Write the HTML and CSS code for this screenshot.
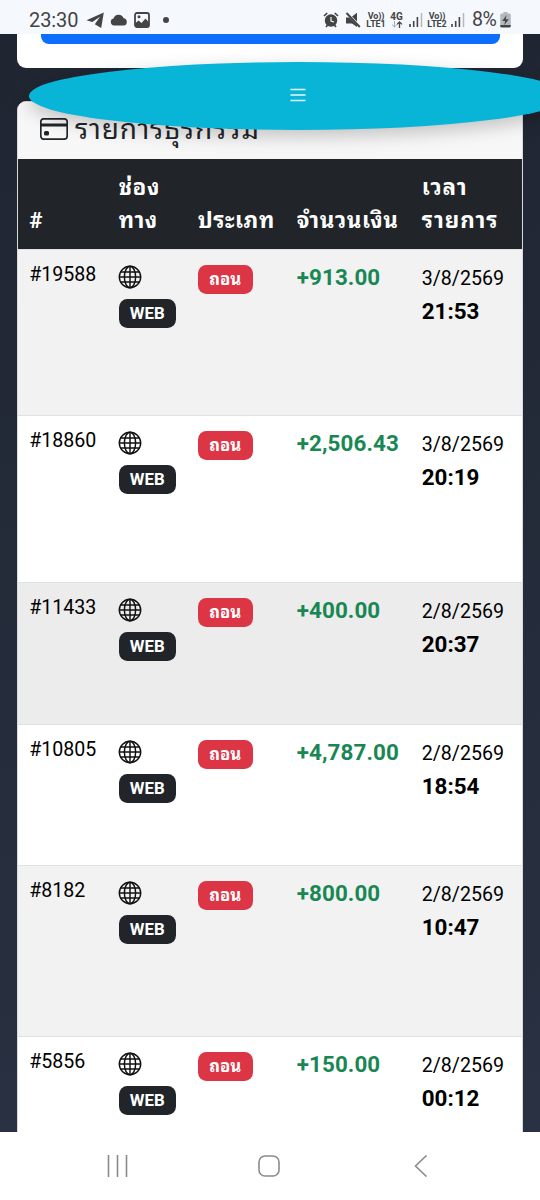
FILE: index.html
```html
<!DOCTYPE html>
<html lang="th">
<head>
<meta charset="utf-8">
<title>รายการธุรกรรม</title>
<link rel="stylesheet" href="styles.css">
</head>
<body>
<svg class="defs" width="0" height="0">
  <symbol id="globe" viewBox="0 0 24 24">
    <g fill="none" stroke="#111" stroke-width="1.45">
      <circle cx="12" cy="12" r="10.7"/>
      <ellipse cx="12" cy="12" rx="5.6" ry="10.7"/>
      <path d="M12 1v22M1 12h22M2.8 7h18.4M2.8 17h18.4"/>
    </g>
  </symbol>
  <symbol id="signal" viewBox="0 0 14 16">
    <path d="M1 12v3M4.7 9v6M8.4 5v10" stroke="#444" stroke-width="1.6"/>
    <path d="M12.5 1v14" stroke="#b5b9bd" stroke-width="1.5"/>
  </symbol>
</svg>
<div class="phone">
  <header class="status">
    <span class="clock">23:30</span>
    <svg class="telegram" width="19" height="17" viewBox="0 0 19 17"><path d="M.5 8.2 17.8.6 15.2 15.9 8.8 12.3 14 4.7 6.3 9.9Z" fill="#444"/></svg>
    <svg class="cloud" width="18" height="12" viewBox="0 0 18 12"><path d="M4 11.5a3.5 3.5 0 0 1-.5-6.9A5.3 5.3 0 0 1 13.6 4.3a3.7 3.7 0 0 1 .6 7.2Z" fill="#444"/></svg>
    <svg class="photo" width="16" height="16" viewBox="0 0 16 16"><rect x="1" y="1" width="14" height="14" rx="2" fill="none" stroke="#444" stroke-width="1.8"/><path d="M1 11.5 4.5 8.5l3 2.5 4-4.5L15 10.5V14H1Z" fill="#444"/><circle cx="5" cy="4.8" r="1.5" fill="#444"/></svg>
    <i class="dot"></i>
    <div class="status-right">
      <svg class="alarm" width="16" height="16" viewBox="0 0 16 16"><circle cx="8" cy="8.5" r="6.2" fill="#444"/><path d="M1 4 4.2 1M15 4l-3.2-3M3 15l2-2.5M13 15l-2-2.5" stroke="#444" stroke-width="1.7"/><path d="M8 5v4l3 1" fill="none" stroke="#f4f8fd" stroke-width="1.2"/></svg>
      <svg class="mute" width="16" height="16" viewBox="0 0 16 16"><path d="M1 5.5h3.5L12 13v2L7 11.5H1ZM7 4.5 12 .8V9.5Z" fill="#444"/><path d="m1.5 1 13.3 14" stroke="#444" stroke-width="1.9"/></svg>
      <span class="net lte1"><span>Vo))</span><span>LTE1</span></span>
      <span class="net fourg">4G<svg width="12" height="7" viewBox="0 0 12 7"><path d="M3.5 0v6M1 3.6 3.5 6 6 3.6" fill="none" stroke="#aaa"/><path d="M8.5 7V1M6 3.4 8.5 1 11 3.4" fill="none" stroke="#444" stroke-width="1.3"/></svg></span>
      <svg class="sig1" width="14" height="16"><use href="#signal"/></svg>
      <span class="net lte2"><span>Vo))</span><span>LTE2</span></span>
      <svg class="sig2" width="14" height="16"><use href="#signal"/></svg>
      <span class="percent">8%</span>
      <svg class="battery" width="11" height="16" viewBox="0 0 11 16"><path d="M3.5 0h4v1.5h2Q10.8 1.5 10.8 3v10H.2V3Q.2 1.5 1.5 1.5h2Z" fill="#b5b9bd"/><path d="M.2 13h10.6v1q0 1.6-1.6 1.6H1.8Q.2 15.6.2 14Z" fill="#444"/><path d="M6.6 3 2.2 9h2.9l-.8 4 4.5-5.7H5.7Z" fill="#444"/></svg>
    </div>
  </header>

  <main class="page">
    <section class="top-card"><div class="primary-button"></div></section>
    <div class="menu-pill">
      <svg width="16" height="14" viewBox="0 0 16 14"><path d="M.5 1.5h15M.5 7h15M.5 12.5h15" stroke="#e9fbff" stroke-width="1.5"/></svg>
    </div>
    <section class="card">
      <h2 class="card-title">
        <svg width="28" height="22" viewBox="0 0 28 22"><rect x=".8" y=".8" width="26.4" height="20.4" rx="3" fill="none" stroke="#212529" stroke-width="1.7"/><path d="M1 7h26" stroke="#212529" stroke-width="3"/><rect x="4" y="13" width="5" height="4.5" rx="1.5" fill="#212529"/></svg>
        <span>รายการธุรกรรม</span>
      </h2>
      <div class="row head">
        <div>#</div><div>ช่อง<br>ทาง</div><div>ประเภท</div><div>จำนวนเงิน</div><div class="when">เวลา<br>รายการ</div>
      </div>
      <div class="row h166 odd">
        <div class="id">#19588</div>
        <div class="channel"><svg><use href="#globe"/></svg><span class="badge dark">WEB</span></div>
        <div class="type"><span class="badge red">ถอน</span></div>
        <div class="amount">+913.00</div>
        <div class="time">3/8/2569<b>21:53</b></div>
      </div>
      <div class="row h167">
        <div class="id">#18860</div>
        <div class="channel"><svg><use href="#globe"/></svg><span class="badge dark">WEB</span></div>
        <div class="type"><span class="badge red">ถอน</span></div>
        <div class="amount">+2,506.43</div>
        <div class="time">3/8/2569<b>20:19</b></div>
      </div>
      <div class="row h142 pressed">
        <div class="id">#11433</div>
        <div class="channel"><svg><use href="#globe"/></svg><span class="badge dark">WEB</span></div>
        <div class="type"><span class="badge red">ถอน</span></div>
        <div class="amount">+400.00</div>
        <div class="time">2/8/2569<b>20:37</b></div>
      </div>
      <div class="row h141">
        <div class="id">#10805</div>
        <div class="channel"><svg><use href="#globe"/></svg><span class="badge dark">WEB</span></div>
        <div class="type"><span class="badge red">ถอน</span></div>
        <div class="amount">+4,787.00</div>
        <div class="time">2/8/2569<b>18:54</b></div>
      </div>
      <div class="row h171 odd">
        <div class="id">#8182</div>
        <div class="channel"><svg><use href="#globe"/></svg><span class="badge dark">WEB</span></div>
        <div class="type"><span class="badge red">ถอน</span></div>
        <div class="amount">+800.00</div>
        <div class="time">2/8/2569<b>10:47</b></div>
      </div>
      <div class="row h171">
        <div class="id">#5856</div>
        <div class="channel"><svg><use href="#globe"/></svg><span class="badge dark">WEB</span></div>
        <div class="type"><span class="badge red">ถอน</span></div>
        <div class="amount">+150.00</div>
        <div class="time">2/8/2569<b>00:12</b></div>
      </div>
    </section>
  </main>

  <nav class="navbar">
    <svg width="22" height="22" viewBox="0 0 22 22"><path d="M1.5 0v22M10.5 0v22M19.5 0v22" stroke="#8b8b8b" stroke-width="1.6"/></svg>
    <svg width="22" height="22" viewBox="0 0 22 22"><rect x="1" y="1" width="20" height="20" rx="6" fill="none" stroke="#8b8b8b" stroke-width="1.6"/></svg>
    <svg width="14" height="22" viewBox="0 0 14 22"><path d="M12.5.5 1.5 11l11 10.5" fill="none" stroke="#8b8b8b" stroke-width="1.6"/></svg>
  </nav>
</div>
</body>
</html>
```

FILE: styles.css
```css
* { box-sizing: border-box; }
body { margin: 0; font-family: Roboto, "Noto Sans Thai Looped", "Noto Looped Thai", Loma, Garuda, "Noto Sans Thai", sans-serif; }
svg { display: block; flex: none; }
.defs { position: absolute; }
.phone { width: 540px; height: 1200px; display: flex; flex-direction: column; overflow: hidden; }

.status { height: 34px; flex: none; display: flex; align-items: center; padding: 6px 29px 0 29px; background: #f5f9fe; color: #444; }
.clock { width: 50px; font-size: 20px; line-height: 24px; letter-spacing: -.1px; white-space: nowrap; }
.telegram { margin-left: 7px; }
.cloud { margin-left: 5px; }
.photo { margin-left: 6px; }
.dot { width: 6px; height: 6px; margin-left: 13px; border-radius: 50%; background: #444; }
.status-right { flex: 1; display: flex; align-items: center; justify-content: flex-end; }
.mute { margin-left: 6px; }
.net { display: flex; flex-direction: column; align-items: center; font-size: 9px; line-height: 8px; font-weight: 700; white-space: nowrap; letter-spacing: -.1px; }
.lte1 { width: 20px; margin-left: 5px; }
.fourg { width: 13px; margin-left: 4px; font-size: 10px; }
.sig1 { margin-left: 6px; }
.lte2 { width: 20px; margin-left: 4px; }
.sig2 { margin-left: 4px; }
.percent { width: 25px; margin-left: 7px; font-size: 19.5px; line-height: 24px; letter-spacing: -.5px; }
.battery { margin-left: 3px; }

.page { position: relative; height: 1098px; flex: none; padding: 0 17px; overflow: hidden; background: linear-gradient(175deg, #1f2531, #293142); }
.top-card { height: 33.5px; padding: 0 23.5px; background: #fff; border-radius: 0 0 9px 9px; }
.primary-button { height: 10px; background: #0d6efd; border-radius: 0 0 8px 8px; }
.menu-pill { position: absolute; left: 28.5px; top: 28px; width: 539px; height: 67.5px; display: flex; align-items: center; justify-content: center; padding-bottom: 2px; border-radius: 50%; background: #08b5d7; box-shadow: 0 6px 18px rgba(0,0,0,.22); }
.card { margin-top: 33.5px; border: 1px solid #d9dadb; border-radius: 9px 9px 0 0; background: #fff; overflow: hidden; }
.card-title { height: 57px; margin: 0; padding: 11px 0 0 22px; display: flex; align-items: flex-start; gap: 7px; background: #f7f7f7; color: #212529; font-size: 28px; font-weight: 400; line-height: 34px; letter-spacing: .85px; }
.card-title svg { margin-top: 5px; }

.row { display: grid; grid-template-columns: 89.5px 79px 99px 125px 1fr; border-bottom: 1px solid #dee2e6; color: #000; background: #fff; font-size: 22.4px; }
.row > div { padding-left: 11.2px; white-space: nowrap; }
.head { height: 91px; padding-bottom: 11px; align-items: end; background: #212529; color: #fff; font-weight: 700; line-height: 33.6px; letter-spacing: .6px; }
.head .when { letter-spacing: 1px; }
.odd { background: #f2f2f2; }
.pressed { background: #ececec; }
.h166 { height: 166.4px; }
.h167 { height: 166.8px; }
.h142 { height: 141.8px; }
.h141 { height: 141px; }
.h171 { height: 171px; }
.id { padding-top: 13px; font-size: 19.6px; line-height: 24px; }
.channel { padding-top: 15px; }
.channel svg { width: 24px; height: 24px; margin: 0 0 10px -.3px; }
.badge { display: flex; align-items: center; justify-content: center; height: 29px; border-radius: 8.4px; color: #fff; font-size: 16.8px; line-height: 17px; font-weight: 700; }
.dark { width: 57px; background: #212529; }
.type { padding-top: 15px; }
.red { width: 55px; background: #dc3545; }
.amount { padding-top: 13px; color: #198754; font-weight: 700; line-height: 28px; letter-spacing: .1px; }
.time { padding-top: 12px; font-size: 19.6px; line-height: 33.6px; }
.time b { display: block; margin-top: -1px; font-size: 22.4px; }

.navbar { height: 68px; flex: none; display: grid; grid-template-columns: 161px 140px 14px; padding: 23px 0 0 107px; background: #fff; }
.navbar svg:nth-child(2) { margin-left: -10px; }
.navbar svg:nth-child(3) { margin-left: 6px; }
```
